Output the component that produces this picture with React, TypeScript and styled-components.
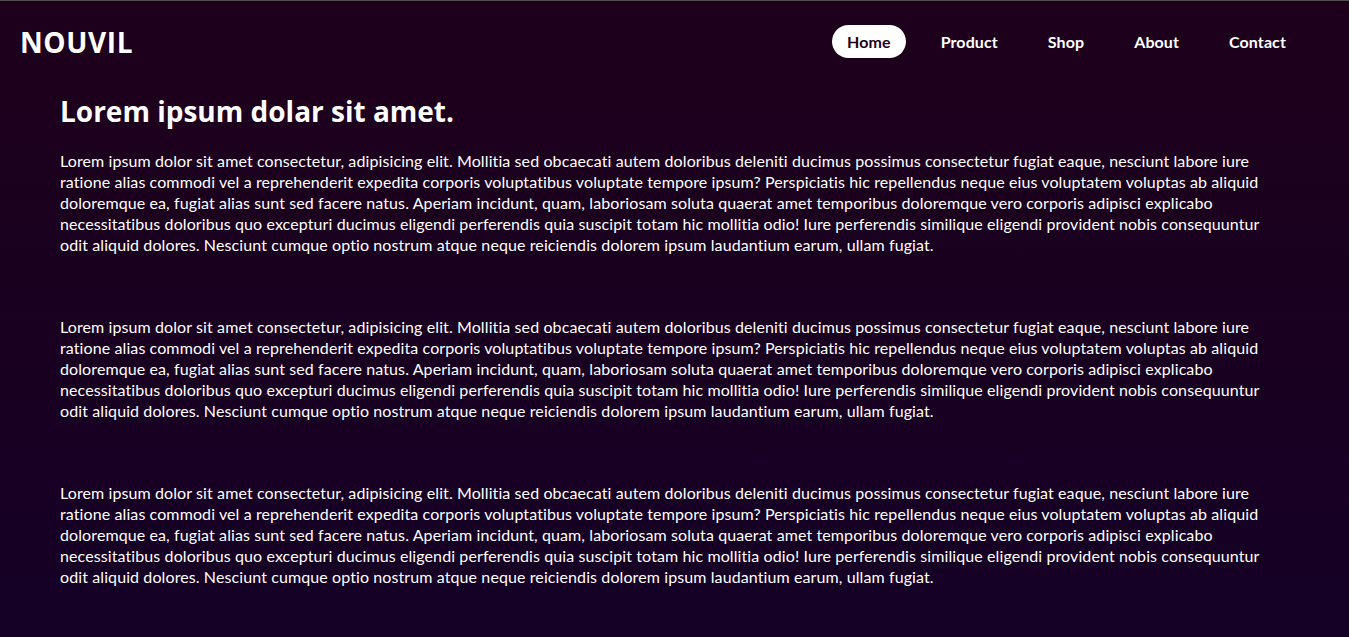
import React from "react";
import styled, { createGlobalStyle } from "styled-components";

const GlobalStyle = createGlobalStyle`
  html, body { margin: 0; padding: 0; }
  body { font-family: "Lato", "Open Sans", sans-serif; }
  * { box-sizing: border-box; }
`;

const Page = styled.div`
  min-height: 637px;
  border-top: 1px solid #505050;
  background: linear-gradient(180deg, #1e001b 0%, #150026 100%);
  color: #ffffff;
`;

const Header = styled.header`
  height: 81px;
  display: flex;
  align-items: center;
  justify-content: space-between;
  padding: 0 48px 0 20px;
`;

const Logo = styled.div`
  font-family: "Open Sans", sans-serif;
  font-weight: 700;
  font-size: 28px;
  letter-spacing: 0.6px;
`;

const NavList = styled.nav`
  display: flex;
  align-items: center;
  gap: 20px;
`;

const NavLink = styled.a<{ $active?: boolean }>`
  display: block;
  height: 33px;
  line-height: 33px;
  padding: 0 15px;
  border-radius: 17px;
  font-weight: 700;
  font-size: 16px;
  letter-spacing: 0.1px;
  color: ${(p) => (p.$active ? "#1e001b" : "#ffffff")};
  background: ${(p) => (p.$active ? "#ffffff" : "transparent")};
  text-decoration: none;
  cursor: pointer;
`;

const Main = styled.main`
  padding: 12px 60px 40px;
  display: flex;
  flex-direction: column;
`;

const Title = styled.h1`
  margin: 0 0 22px;
  font-family: "Open Sans", sans-serif;
  font-weight: 700;
  font-size: 28px;
  line-height: 34px;
`;

const Paragraphs = styled.div`
  display: flex;
  flex-direction: column;
  gap: 61px;
`;

const Para = styled.p`
  margin: 0;
  font-size: 16px;
  line-height: 21px;
  letter-spacing: 0.1px;
`;

const text =
  "Lorem ipsum dolor sit amet consectetur, adipisicing elit. Mollitia sed obcaecati autem doloribus deleniti ducimus possimus consectetur fugiat eaque, nesciunt labore iure ratione alias commodi vel a reprehenderit expedita corporis voluptatibus voluptate tempore ipsum? Perspiciatis hic repellendus neque eius voluptatem voluptas ab aliquid doloremque ea, fugiat alias sunt sed facere natus. Aperiam incidunt, quam, laboriosam soluta quaerat amet temporibus doloremque vero corporis adipisci explicabo necessitatibus doloribus quo excepturi ducimus eligendi perferendis quia suscipit totam hic mollitia odio! Iure perferendis similique eligendi provident nobis consequuntur odit aliquid dolores. Nesciunt cumque optio nostrum atque neque reiciendis dolorem ipsum laudantium earum, ullam fugiat.";

const links = ["Home", "Product", "Shop", "About", "Contact"];

export default function App() {
  return (
    <Page>
      <GlobalStyle />
      <Header>
        <Logo>NOUVIL</Logo>
        <NavList>
          {links.map((l) => (
            <NavLink key={l} $active={l === "Home"}>
              {l}
            </NavLink>
          ))}
        </NavList>
      </Header>
      <Main>
        <Title>Lorem ipsum dolar sit amet.</Title>
        <Paragraphs>
          <Para>{text}</Para>
          <Para>{text}</Para>
          <Para>{text}</Para>
        </Paragraphs>
      </Main>
    </Page>
  );
}
